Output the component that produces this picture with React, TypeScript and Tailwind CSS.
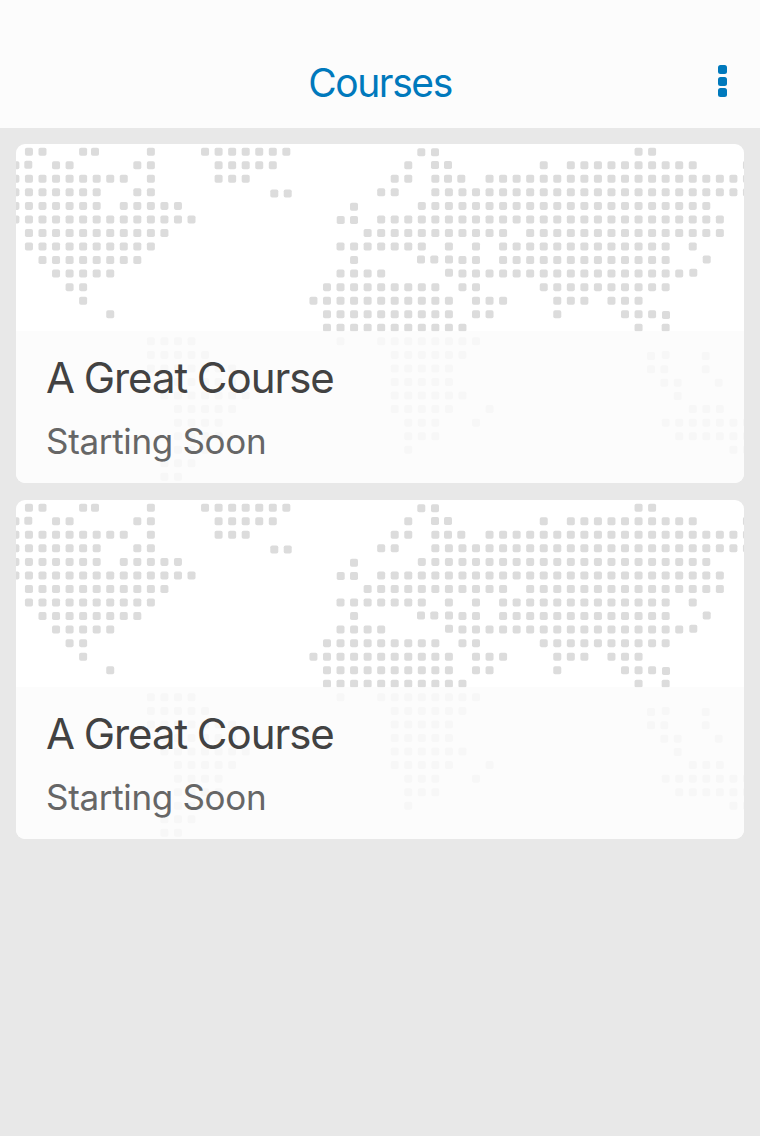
const PITCH = 13.547;

// Inclusive column runs of map dots, one list per row.
const ROWS: [number, number][][] = [
  [[1, 2], [5, 5], [10, 10], [14, 20], [46, 47]],
  [[0, 0], [3, 4], [9, 10], [15, 19], [29, 29], [39, 39], [41, 50], [54, 54]],
  [[0, 8], [10, 10], [15, 17], [28, 29], [31, 31], [35, 54]],
  [[0, 6], [9, 10], [27, 28], [31, 54]],
  [[0, 6], [8, 12], [30, 51]],
  [[0, 13], [27, 52]],
  [[1, 11], [26, 36], [38, 52]],
  [[1, 10], [24, 30], [32, 32], [34, 34], [36, 48], [50, 50]],
  [[2, 9], [25, 25], [33, 34], [36, 48]],
  [[3, 7], [24, 27], [33, 49]],
  [[4, 5], [23, 31], [33, 34], [39, 48]],
  [[5, 5], [22, 32], [34, 36], [40, 42], [44, 46]],
  [[7, 7], [23, 32], [34, 35], [40, 40], [45, 47]],
  [[23, 33], [46, 46], [48, 48]],
  [[10, 13], [24, 24], [27, 34]],
  [[10, 14], [28, 33], [48, 48]],
  [[10, 16], [28, 32]],
  [[11, 16], [28, 32]],
  [[11, 17], [28, 33]],
  [[12, 16], [28, 32], [35, 35], [50, 52]],
  [[12, 15], [29, 31], [34, 34], [48, 54]],
  [[12, 15], [29, 31], [49, 54]],
  [[12, 14], [29, 29], [53, 54]],
  [[11, 13]],
  [[11, 12]],
];

// Centres of the islands that sit off the regular grid.
const EXTRA: [number, number][] = [
  [79, 7.7], [405.3, 8.3], [419, 8.3],
  [12.3, 20.7], [419, 21], [432, 21], [432, 34.8], [445.3, 34.8],
  [258.3, 49.5], [271.7, 49.5],
  [338, 62.7], [324.7, 76], [338, 76],
  [418.3, 115.5], [433, 115.5], [690.7, 115.5],
  [405, 115.5], [433, 128.7], [677.3, 128.7],
  [650, 171], [635, 212], [689.7, 212],
  [635, 225.3], [648.3, 225.3], [689.7, 225.3],
  [648.3, 238.7], [661.7, 238.7], [702.7, 238.7], [661.7, 252],
];

function WorldMap() {
  const dots: [number, number][] = [];
  ROWS.forEach((runs, row) => {
    runs.forEach(([from, to]) => {
      for (let col = from; col <= to; col++) {
        dots.push([-0.6 + col * PITCH, 7.7 + row * PITCH]);
      }
    });
  });
  return (
    <svg className="absolute inset-0 h-full w-full" viewBox="0 0 728 339" fill="#dcdcdc">
      {dots.concat(EXTRA).map(([x, y], i) => (
        <rect key={i} x={x - 4} y={y - 4} width="8" height="8" rx="1.8" />
      ))}
    </svg>
  );
}

function CourseCard({ title, status }: { title: string; status: string }) {
  return (
    <article className="relative flex h-[339px] flex-col justify-end overflow-hidden rounded-[9px] bg-white">
      <WorldMap />
      <div className="relative h-[152px] bg-[#fcfcfc]/85 pl-[30px] pt-[21px]">
        <h2 className="whitespace-nowrap text-[42px] leading-[52px] tracking-[-1.05px] [word-spacing:-1px] text-[#424242]">{title}</h2>
        <p className="mt-[15px] whitespace-nowrap text-[35px] leading-[44px] tracking-[-0.32px] text-[#666666]">{status}</p>
      </div>
    </article>
  );
}

export default function App() {
  return (
    <div className="h-[1136px] w-[760px] overflow-hidden bg-[#e8e8e8] font-['Inter',sans-serif]">
      <header className="grid h-32 grid-cols-[1fr_auto_1fr] items-center bg-[#fcfcfc] pt-9">
        <h1 className="col-start-2 pt-px text-[39px] leading-[48px] tracking-[-1.4px] text-[#0079bc]">Courses</h1>
        <button aria-label="Menu" className="mb-[2px] mr-[33px] flex flex-col gap-[2.5px] justify-self-end">
          <span className="size-[9px] rounded-[2.5px] bg-[#0079bc]" />
          <span className="size-[9px] rounded-[2.5px] bg-[#0079bc]" />
          <span className="size-[9px] rounded-[2.5px] bg-[#0079bc]" />
        </button>
      </header>
      <main className="flex flex-col gap-[17px] p-4">
        <CourseCard title="A Great Course" status="Starting Soon" />
        <CourseCard title="A Great Course" status="Starting Soon" />
      </main>
    </div>
  );
}
